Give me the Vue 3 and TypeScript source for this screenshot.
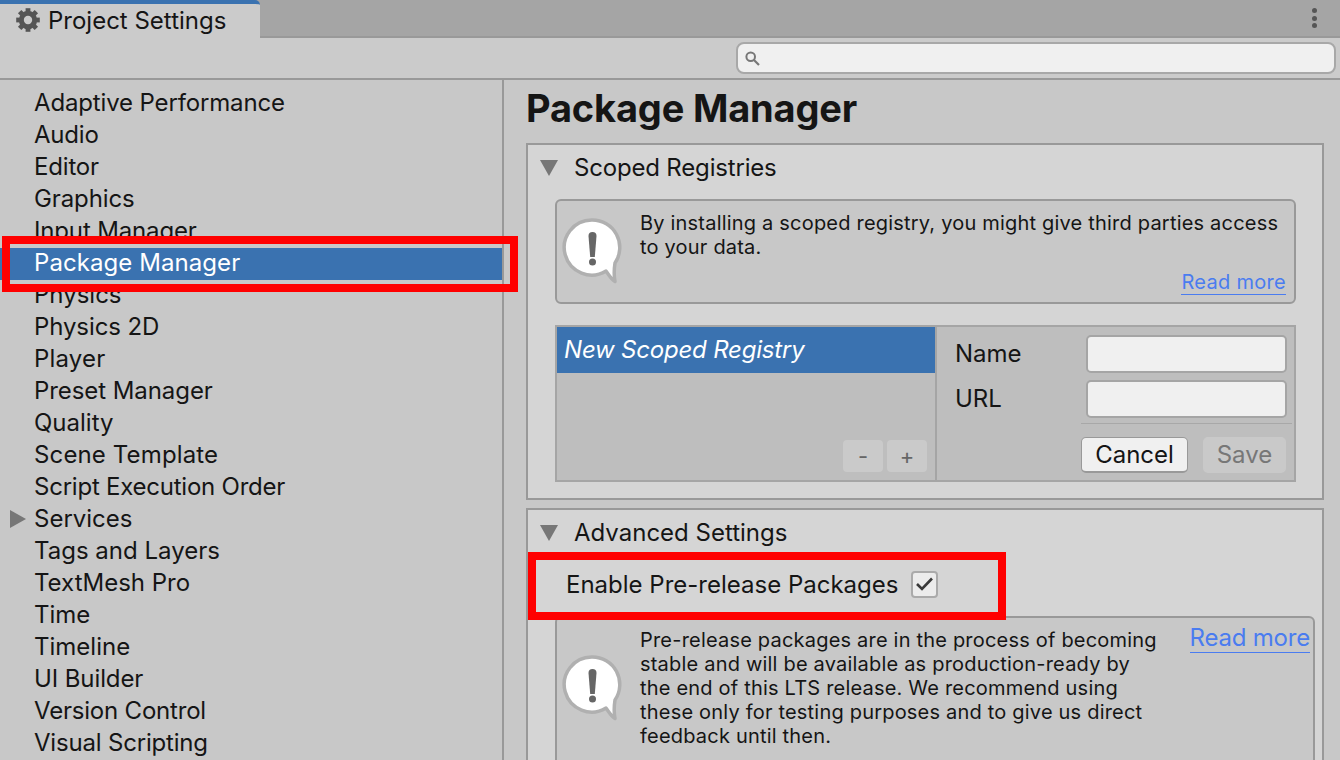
<script setup lang="ts">
interface Item { name: string; spacing: number }
const items: Item[] = [
  { name: 'Adaptive Performance', spacing: -0.15 },
  { name: 'Audio', spacing: -0.2 },
  { name: 'Editor', spacing: -0.17 },
  { name: 'Graphics', spacing: -0.12 },
  { name: 'Input Manager', spacing: -0.15 },
  { name: 'Package Manager', spacing: 0.07 },
  { name: 'Physics', spacing: 0 },
  { name: 'Physics 2D', spacing: -0.1 },
  { name: 'Player', spacing: 0.17 },
  { name: 'Preset Manager', spacing: -0.07 },
  { name: 'Quality', spacing: 0 },
  { name: 'Scene Template', spacing: 0.14 },
  { name: 'Script Execution Order', spacing: -0.23 },
  { name: 'Services', spacing: 0 },
  { name: 'Tags and Layers', spacing: 0 },
  { name: 'TextMesh Pro', spacing: 0 },
  { name: 'Time', spacing: 0 },
  { name: 'Timeline', spacing: 0 },
  { name: 'UI Builder', spacing: -0.1 },
  { name: 'Version Control', spacing: -0.2 },
  { name: 'Visual Scripting', spacing: -0.19 },
]
const teeth: number[] = [0, 45, 90, 135]
</script>

<template>
  <div class="root">
    <div class="tabbar">
      <div class="tab">
        <svg class="gear" width="24" height="24" viewBox="0 0 24 24">
          <circle cx="12" cy="12" r="6.800" fill="none" stroke="#555" stroke-width="4.800"/>
          <path v-for="a in teeth" :key="a" d="M12 0.200v23.600" stroke="#555" stroke-width="4.800" :transform="`rotate(${a} 12 12)`"/>
          <circle cx="12" cy="12" r="4.200" fill="#cbcbcb"/>
        </svg>
        <span>Project Settings</span>
      </div>
      <div class="dots"><i></i><i></i><i></i></div>
    </div>
    <div class="toolbar">
      <div class="search">
        <svg width="16" height="18" viewBox="0 0 16 18"><circle cx="5.700" cy="7.700" r="4.300" fill="none" stroke="#777" stroke-width="2"/><path d="M9 11l5 5" stroke="#777" stroke-width="2.200"/></svg>
      </div>
    </div>
    <div class="main">
      <aside class="side">
        <div v-for="it in items" :key="it.name" class="row" :class="{ sel: it.name === 'Package Manager' }" :style="{ letterSpacing: it.spacing + 'px' }">
          <span v-if="it.name === 'Services'" class="caret"></span>
          {{ it.name }}
        </div>
      </aside>
      <section class="content">
        <h1>Package Manager</h1>
        <div class="panel first">
          <div class="fold"><span class="tri"></span>Scoped Registries</div>
          <div class="info short">
            <svg class="bubble" width="68" height="72" viewBox="0 0 68 72">
              <path d="M33 7a27.500 27.500 0 1 0 14 51c3 4 5 8 9 10.500-1-5-1-12 0-18.500A27.500 27.500 0 0 0 33 7z" fill="#fff" stroke="#b0b0b0" stroke-width="3.500" stroke-linejoin="round"/>
              <path d="M29.500 23a4 4 0 0 1 8 0l-1.700 21h-4.600z" fill="#666"/><circle cx="33.500" cy="49" r="3.500" fill="#666"/>
            </svg>
            <div class="msg">By installing a scoped registry, you might give third parties access to your data.</div>
            <a class="more small">Read more</a>
          </div>
          <div class="reg">
            <div class="list">
              <div class="entry">New Scoped Registry</div>
              <div class="pm"><span class="pmb">-</span><span class="pmb">+</span></div>
            </div>
            <div class="form">
              <div class="field"><label>Name</label><div class="input"></div></div>
              <div class="field"><label>URL</label><div class="input"></div></div>
              <div class="actions">
                <span class="btn">Cancel</span>
                <span class="btn off">Save</span>
              </div>
            </div>
          </div>
        </div>
        <div class="panel second">
          <div class="fold"><span class="tri"></span>Advanced Settings</div>
          <div class="check">
            <span>Enable Pre-release Packages</span>
            <span class="box">
              <svg width="17" height="14" viewBox="0 0 17 14"><path d="M1 7l5 5L16 1.500" fill="none" stroke="#3a3a3a" stroke-width="2.600"/></svg>
            </span>
          </div>
          <div class="info tall">
            <svg class="bubble" width="68" height="72" viewBox="0 0 68 72">
              <path d="M33 7a27.500 27.500 0 1 0 14 51c3 4 5 8 9 10.500-1-5-1-12 0-18.500A27.500 27.500 0 0 0 33 7z" fill="#fff" stroke="#b0b0b0" stroke-width="3.500" stroke-linejoin="round"/>
              <path d="M29.500 23a4 4 0 0 1 8 0l-1.700 21h-4.600z" fill="#666"/><circle cx="33.500" cy="49" r="3.500" fill="#666"/>
            </svg>
            <div class="msg narrow">Pre-release packages are in the process of becoming stable and will be available as production-ready by the end of this LTS release. We recommend using these only for testing purposes and to give us direct feedback until then.</div>
            <a class="more big">Read more</a>
          </div>
        </div>
      </section>
    </div>
    <div class="red r1"></div>
    <div class="red r2"></div>
  </div>
</template>

<style scoped>
.root { position: relative; width: 1340px; height: 760px; overflow: hidden; display: flex; flex-direction: column; background: #c8c8c8; color: #151515; font-family: Inter, "Liberation Sans", sans-serif; font-size: 24px; }
.tabbar { height: 38px; flex: none; display: flex; justify-content: space-between; background: #a5a5a5; box-shadow: inset 0 -2px 0 #999; }
.tab { width: 260px; height: 38px; box-sizing: border-box; border-top: 4px solid #3a72b0; border-top-right-radius: 5px; background: #cbcbcb; display: flex; align-items: center; gap: 8px; padding-left: 16px; padding-bottom: 2px; }
.gear { flex: none; }
.dots { width: 52px; display: flex; flex-direction: column; align-items: center; justify-content: center; gap: 2.500px; padding-bottom: 2px; }
.dots i { width: 5px; height: 5px; border-radius: 50%; background: #555; }
.toolbar { height: 42px; flex: none; box-sizing: border-box; background: #cbcbcb; border-bottom: 2px solid #999; display: flex; justify-content: flex-end; padding: 4px 4px 0 0; }
.search { width: 600px; height: 32px; box-sizing: border-box; background: #f0f0f0; border: 2px solid #a8a8a8; border-radius: 8px; display: flex; align-items: center; padding-left: 7px; }
.main { flex: 1; display: flex; min-height: 0; }
.side { width: 504px; flex: none; box-sizing: border-box; padding-top: 7px; border-right: 2px solid #999; background: #c8c8c8; }
.row { position: relative; height: 32px; line-height: 32px; padding-left: 34px; white-space: nowrap; }
.row.sel { background: #3a72b0; color: #fff; margin-top: 1px; margin-bottom: -1px; line-height: 30px; }
.caret { position: absolute; left: 10px; top: 7px; width: 0; height: 0; border-left: 16px solid #777; border-top: 9px solid transparent; border-bottom: 9px solid transparent; }
.content { flex: 1; min-width: 0; padding: 0 16px 0 22px; }
h1 { margin: 6px 0 13px; font-size: 38px; line-height: 44px; font-weight: 700; letter-spacing: -0.17px; }
.panel { width: 798px; box-sizing: border-box; background: #d5d5d5; border: 2px solid #999; }
.first { height: 357px; margin-bottom: 8px; }
.second { height: 300px; }
.fold { display: flex; align-items: center; height: 46px; padding-left: 12px; margin-bottom: 8px; line-height: 1; letter-spacing: -0.18px; }
.second .fold { letter-spacing: 0; }
.tri { width: 0; height: 0; border-top: 16px solid #777; border-left: 9px solid transparent; border-right: 9px solid transparent; margin-right: 16px; }
.info { position: relative; margin-left: 27px; box-sizing: border-box; background: #c8c8c8; border: 2px solid #999; border-radius: 6px; display: flex; font-size: 20px; line-height: 24px; letter-spacing: 0.2px; }
.short { width: 741px; height: 105px; }
.tall { width: 760px; height: 170px; }
.bubble { position: absolute; left: 2px; filter: blur(0.7px); }
.short .bubble { top: 12px; }
.tall .bubble { top: 32px; }
.msg { margin-left: 83px; padding-top: 10px; width: 650px; }
.msg.narrow { width: 522px; }
.more { position: absolute; color: #4a7cf0; border-bottom: 1px solid #4a7cf0; line-height: 1.150; }
.more.small { right: 8px; bottom: 7px; letter-spacing: 0.3px; }
.more.big { right: 3px; top: 6px; font-size: 24px; letter-spacing: -0.2px; }
.reg { margin: 21px 0 0 27px; width: 741px; height: 157px; box-sizing: border-box; background: #bebebe; border: 2px solid #a5a5a5; display: flex; }
.list { width: 378px; flex: none; position: relative; border-right: 2px solid #a5a5a5; box-sizing: content-box; }
.entry { height: 46px; line-height: 46px; background: #3a72b0; color: #fff; font-style: italic; padding-left: 7px; letter-spacing: -0.2px; }
.pm { position: absolute; right: 8px; bottom: 8px; display: flex; gap: 4px; }
.pmb { width: 40px; height: 32px; background: #cacaca; border-radius: 4px; text-align: center; line-height: 32px; font-size: 22px; color: #666; }
.form { flex: 1; position: relative; padding: 8px 7px 0 18px; }
.field { display: flex; justify-content: space-between; align-items: center; height: 38px; margin-bottom: 6px; }
.field:first-child { margin-bottom: 7px; }
.field label { position: relative; top: -1px; }
.input { width: 201px; height: 38px; box-sizing: border-box; background: #f0f0f0; border: 2px solid #a5a5a5; border-radius: 5px; }
.actions { margin: -1px -5px 0 126px; border-top: 1px solid #a8a8a8; padding-top: 13px; display: flex; justify-content: space-between; padding-right: 6px; }
.btn { width: 107px; height: 36px; box-sizing: border-box; background: #f0f0f0; border: 1px solid #999; border-bottom-width: 2px; border-radius: 5px; text-align: center; line-height: 34px; }
.btn.off { width: 83px; background: #c9c9c9; color: #777; border-color: #c9c9c9; }
.check { height: 60px; display: flex; align-items: center; padding: 0 0 4px 38px; gap: 13px; margin-top: -8px; box-sizing: border-box; }
.box { width: 27px; height: 27px; box-sizing: border-box; background: #ececec; border: 2px solid #aaa; border-radius: 4px; display: flex; align-items: center; justify-content: center; }
.red { position: absolute; box-sizing: border-box; border: 8px solid #f00; pointer-events: none; }
.r1 { left: 2px; top: 236px; width: 516px; height: 56px; }
.r2 { left: 528px; top: 552px; width: 478px; height: 68px; }
</style>
